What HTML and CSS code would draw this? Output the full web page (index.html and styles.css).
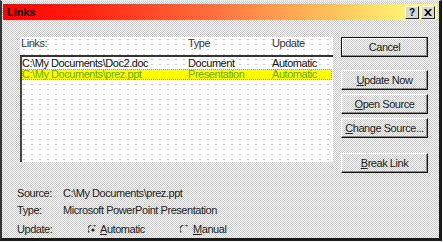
FILE: index.html
```html
<!DOCTYPE html>
<html>
<head>
<meta charset="utf-8">
<link rel="stylesheet" href="styles.css">
</head>
<body>
<div class="window">
  <div class="titlebar">
    <span class="title">Links</span>
    <div class="tbtns">
      <span class="tbtn">?</span>
      <span class="tbtn x">
        <svg width="8" height="7" viewBox="0 0 8 7"><path d="M0 0h2l2 2.2L6 0h2L5 3.5 8 7H6L4 4.8 2 7H0l3-3.5z" fill="#000"/></svg>
      </span>
    </div>
  </div>
  <div class="top">
    <div class="listpanel">
      <div class="head">
        <span class="c1">Links:</span><span class="c2">Type</span><span class="c3">Update</span>
      </div>
      <div class="list">
        <div class="row"><span class="c1">C:\My Documents\Doc2.doc</span><span class="c2">Document</span><span class="c3">Automatic</span></div>
        <div class="row sel"><span class="c1">C:\My Documents\prez.ppt</span><span class="c2">Presentation</span><span class="c3">Automatic</span></div>
      </div>
    </div>
    <div class="buttons">
      <div class="btn default">Cancel</div>
      <div class="btn b2"><u>U</u>pdate Now</div>
      <div class="btn"><u>O</u>pen Source</div>
      <div class="btn"><u>C</u>hange Source...</div>
      <div class="btn b5"><u>B</u>reak Link</div>
    </div>
  </div>
  <div class="info">
    <div class="irow"><span class="lbl">Source:</span><span class="val">C:\My Documents\prez.ppt</span></div>
    <div class="irow"><span class="lbl">Type:</span><span class="val">Microsoft PowerPoint Presentation</span></div>
    <div class="irow last">
      <span class="lbl">Update:</span>
      <span class="val radios">
        <span class="radio r1">
          <svg width="10" height="10" viewBox="0 0 10 10"><path d="M1.2 7.5A4.3 4.3 0 0 1 7.5 1.2" fill="none" stroke="#444" stroke-width="1.3"/><circle cx="5" cy="5" r="1.6" fill="#222"/></svg>
          <span><u>A</u>utomatic</span>
        </span>
        <span class="radio r2">
          <svg width="10" height="10" viewBox="0 0 10 10"><path d="M1.2 7.5A4.3 4.3 0 0 1 7.5 1.2" fill="none" stroke="#444" stroke-width="1.3"/></svg>
          <span><u>M</u>anual</span>
        </span>
      </span>
    </div>
  </div>
</div>
</body>
</html>
```

FILE: styles.css
```css
html, body {
  margin: 0;
  padding: 0;
  background: #fff;
}
body {
  font-family: "Liberation Sans", Arial, sans-serif;
  font-size: 11px;
  letter-spacing: -0.45px;
  color: #222;
  white-space: nowrap;
}
.window {
  width: 437px;
  height: 237px;
  border-top: 1px solid #e8e8e8;
  border-left: 2px solid #333;
  border-right: 3px solid #1a1a1a;
  border-bottom: 3px solid #1a1a1a;
  background: repeating-conic-gradient(#c8c8c8 0 25%, #fbfbfb 0 50%) 0 0 / 2px 2px;
  overflow: hidden;
}
.titlebar {
  margin: 3px 2px 0 1px;
  height: 16px;
  display: flex;
  align-items: center;
  justify-content: space-between;
  background: linear-gradient(to right, #ff0000 0%, #ff2010 18%, #ff4a28 34%, #ff7440 50%, #ffa050 64%, #ffc85c 78%, #ffec70 90%, #ffff90 100%);
}
.title {
  font-weight: bold;
  color: #000;
  padding-left: 4px;
  font-size: 11px;
  letter-spacing: 0;
}
.tbtns {
  display: flex;
  gap: 2px;
  padding-right: 2px;
}
.tbtn {
  width: 12px;
  height: 11px;
  display: flex;
  align-items: center;
  justify-content: center;
  font-weight: bold;
  font-size: 10px;
  letter-spacing: 0;
  color: #000;
  background: #d8d8d8;
  border: 1px solid;
  border-color: #fff #222 #222 #fff;
}
.top {
  display: flex;
  margin-top: 17px;
  padding-left: 18px;
  height: 133px;
}
.listpanel {
  width: 313px;
  height: 125px;
  background: #fff radial-gradient(circle, #c8c8c8 0.6px, transparent 0.9px) 0 0 / 8px 5px;
  display: flex;
  flex-direction: column;
}
.head {
  display: flex;
  height: 18px;
  line-height: 12px;
  padding-left: 1px;
  color: #333;
}
.c1 { width: 167px; }
.c2 { width: 84px; }
.c3 { flex: 1; }
.list {
  flex: 1;
  border-top: 2px solid #333;
  border-left: 2px solid #444;
  padding-top: 1px;
}
.row {
  display: flex;
  height: 11px;
  line-height: 11px;
  color: #111;
  margin-right: 1px;
}
.row .c1 { width: 166px; }
.sel {
  background: #ffff00;
  color: #6aaa00;
  outline: 1px dotted #999;
  outline-offset: -1px;
}
.buttons {
  margin-left: 8px;
  width: 87px;
  display: flex;
  flex-direction: column;
  gap: 4px;
}
.btn {
  height: 18px;
  line-height: 18px;
  text-align: center;
  color: #222;
  border: 1px solid;
  border-color: #fff #111 #111 #fff;
  box-shadow: inset -1px -1px #8a8a8a;
}
.btn.default {
  border-color: #111;
  box-shadow: inset -1px -1px #8a8a8a, inset 1px 1px #fff;
}
.btn.b2 { margin-top: 9px; }
.btn.b5 { margin-top: 11px; }
.info {
  margin-top: 15px;
  padding-left: 15px;
}
.irow {
  display: flex;
  height: 17px;
  line-height: 17px;
  color: #222;
}
.irow.last { padding-top: 2px; }
.lbl { width: 46px; }
.radios {
  display: flex;
  padding-left: 25px;
}
.radio {
  display: flex;
  align-items: center;
  gap: 0;
}
.radio svg { margin-right: 2px; }
.r1 { width: 92px; }
.r2 svg { margin-right: 3px; }
```
